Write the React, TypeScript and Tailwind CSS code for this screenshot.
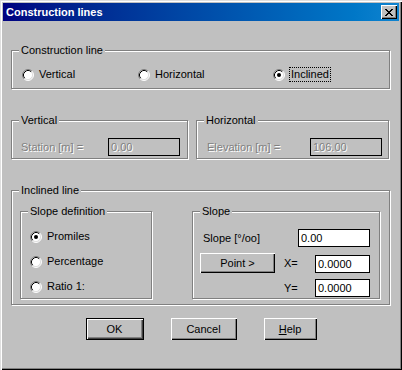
import React from 'react'

const font = { fontFamily: '"Liberation Sans", Arial, sans-serif' }

const etched = 'relative border border-[#808080] shadow-[inset_1px_1px_0_#fff,1px_1px_0_#fff]'
const raised = 'shadow-[inset_1px_1px_0_#fff,inset_-1px_-1px_0_#000,inset_-2px_-2px_0_#808080]'
const disabledText = 'text-[#808080] [text-shadow:1px_1px_0_#fff]'

function Group({ title, className, children }: { title: string; className: string; children?: React.ReactNode }) {
  return (
    <div className={`${etched} ${className}`}>
      <span className="absolute -top-[8px] left-[7px] bg-[#c0c0c0] px-[2px] text-[11px] leading-[14px] text-black">{title}</span>
      {children}
    </div>
  )
}

function RadioDot({ checked }: { checked?: boolean }) {
  return (
    <svg width="12" height="12" viewBox="0 0 12 12" className="shrink-0">
      <circle cx="6" cy="6" r="5" fill="#fff" />
      <path d="M2.11 9.89A5.5 5.5 0 0 1 9.89 2.11" fill="none" stroke="#808080" />
      <path d="M9.89 2.11A5.5 5.5 0 0 1 2.11 9.89" fill="none" stroke="#fff" />
      <path d="M2.82 9.18A4.5 4.5 0 0 1 9.18 2.82" fill="none" stroke="#000" />
      <path d="M9.18 2.82A4.5 4.5 0 0 1 2.82 9.18" fill="none" stroke="#dfdfdf" />
      {checked && <circle cx="6" cy="6" r="2" fill="#000" />}
    </svg>
  )
}

function Radio({ checked, label, focus, className = '' }: { checked?: boolean; label: string; focus?: boolean; className?: string }) {
  return (
    <div className={`flex items-center ${className}`}>
      <RadioDot checked={checked} />
      <span className={`ml-[5px] text-[11px] leading-[13px] text-black ${focus ? 'outline outline-1 outline-dotted outline-black px-[1px]' : ''}`}>
        {label}
      </span>
    </div>
  )
}

function Field({ value, disabled, className }: { value: string; disabled?: boolean; className: string }) {
  return (
    <div className={`h-[18px] border border-black text-[11px] leading-[16px] pl-[2px] ${disabled ? `bg-[#c0c0c0] ${disabledText}` : 'bg-white text-black'} ${className}`}>
      {value}
    </div>
  )
}

function Btn({ children, className, isDefault }: { children: React.ReactNode; className: string; isDefault?: boolean }) {
  return (
    <div
      className={`flex items-center justify-center bg-[#c0c0c0] text-[11px] text-black ${
        isDefault ? 'border border-black shadow-[inset_1px_1px_0_#fff,inset_-1px_-1px_0_#404040,inset_-2px_-2px_0_#808080]' : raised
      } ${className}`}
    >
      {children}
    </div>
  )
}

export default function App() {
  return (
    <div
      className="flex flex-col w-[402px] h-[370px] p-[3px] bg-[#c0c0c0] shadow-[inset_1px_1px_0_#dfdfdf,inset_2px_2px_0_#fff,inset_-1px_-1px_0_#000,inset_-2px_-2px_0_#808080] select-none"
      style={font}
    >
      {/* title bar */}
      <div className="h-[18px] shrink-0 bg-gradient-to-r from-[#000080] to-[#1084d0] flex items-center">
        <span className="ml-[3px] text-[11px] font-bold text-white">Construction lines</span>
        <div className={`ml-auto mr-[2px] w-[16px] h-[14px] bg-[#c0c0c0] ${raised} flex items-center justify-center`}>
          <svg width="8" height="7" viewBox="0 0 8 7" shapeRendering="crispEdges">
            <path d="M0 0h2v1h1v1h2v-1h1v-1h2v1h-1v1h-1v1h-1v1h1v1h1v1h1v1h-2v-1h-1v-1h-2v1h-1v1h-2v-1h1v-1h1v-1h1v-1h-1v-1h-1v-1h-1z" fill="#000" />
          </svg>
        </div>
      </div>

      <div className="flex flex-col px-[8px] pt-[29px]">
        <Group title="Construction line" className="h-[39px] w-[379px] flex items-start pl-[10px] pt-[17px]">
          <Radio label="Vertical" className="w-[116px]" />
          <Radio label="Horizontal" className="w-[135px]" />
          <Radio label="Inclined" checked focus />
        </Group>

        <div className="mt-[31px] flex gap-[8px]">
          <Group title="Vertical" className="h-[39px] w-[177px] flex items-end justify-between pl-[9px] pr-[7px] pb-[2px]">
            <span className={`mb-[2px] text-[11px] leading-[13px] ${disabledText}`}>Station [m] =</span>
            <Field value="0.00" disabled className="w-[72px]" />
          </Group>
          <Group title="Horizontal" className="h-[39px] w-[193px] flex items-end justify-between pl-[10px] pr-[6px] pb-[2px]">
            <span className={`mb-[2px] text-[11px] leading-[13px] ${disabledText}`}>Elevation [m] =</span>
            <Field value="106.00" disabled className="w-[72px]" />
          </Group>
        </div>

        <Group title="Inclined line" className="mt-[31px] h-[115px] w-[379px] flex gap-[40px] pl-[8px] pt-[20px]">
          <Group title="Slope definition" className="h-[88px] w-[132px] flex flex-col gap-[12px] pl-[9px] pt-[18px]">
            <Radio label="Promiles" checked />
            <Radio label="Percentage" />
            <Radio label="Ratio 1:" />
          </Group>

          <Group title="Slope" className="h-[88px] w-[188px] flex flex-col pl-[7px] pr-[9px] pt-[17px]">
            <div className="flex items-center justify-between">
              <span className="pl-[3px] text-[11px] leading-[13px] text-black">Slope [°/oo]</span>
              <Field value="0.00" className="w-[72px]" />
            </div>
            <div className="mt-[6px] grid grid-cols-[75px_22px_55px] items-center gap-x-[9px] gap-y-[6px]">
              <Btn className="h-[20px]">Point &gt;</Btn>
              <span className="text-[11px] leading-[13px] text-black">X=</span>
              <Field value="0.0000" className="w-[55px] mt-[2px]" />
              <span />
              <span className="text-[11px] leading-[13px] text-black">Y=</span>
              <Field value="0.0000" className="w-[55px]" />
            </div>
          </Group>
        </Group>

        <div className="mt-[13px] flex justify-center gap-[27px]">
          <Btn isDefault className="w-[58px] h-[22px]">OK</Btn>
          <Btn className="w-[66px] h-[22px]">Cancel</Btn>
          <Btn className="w-[53px] h-[22px]">
            <span className="underline">H</span>elp
          </Btn>
        </div>
      </div>
    </div>
  )
}
